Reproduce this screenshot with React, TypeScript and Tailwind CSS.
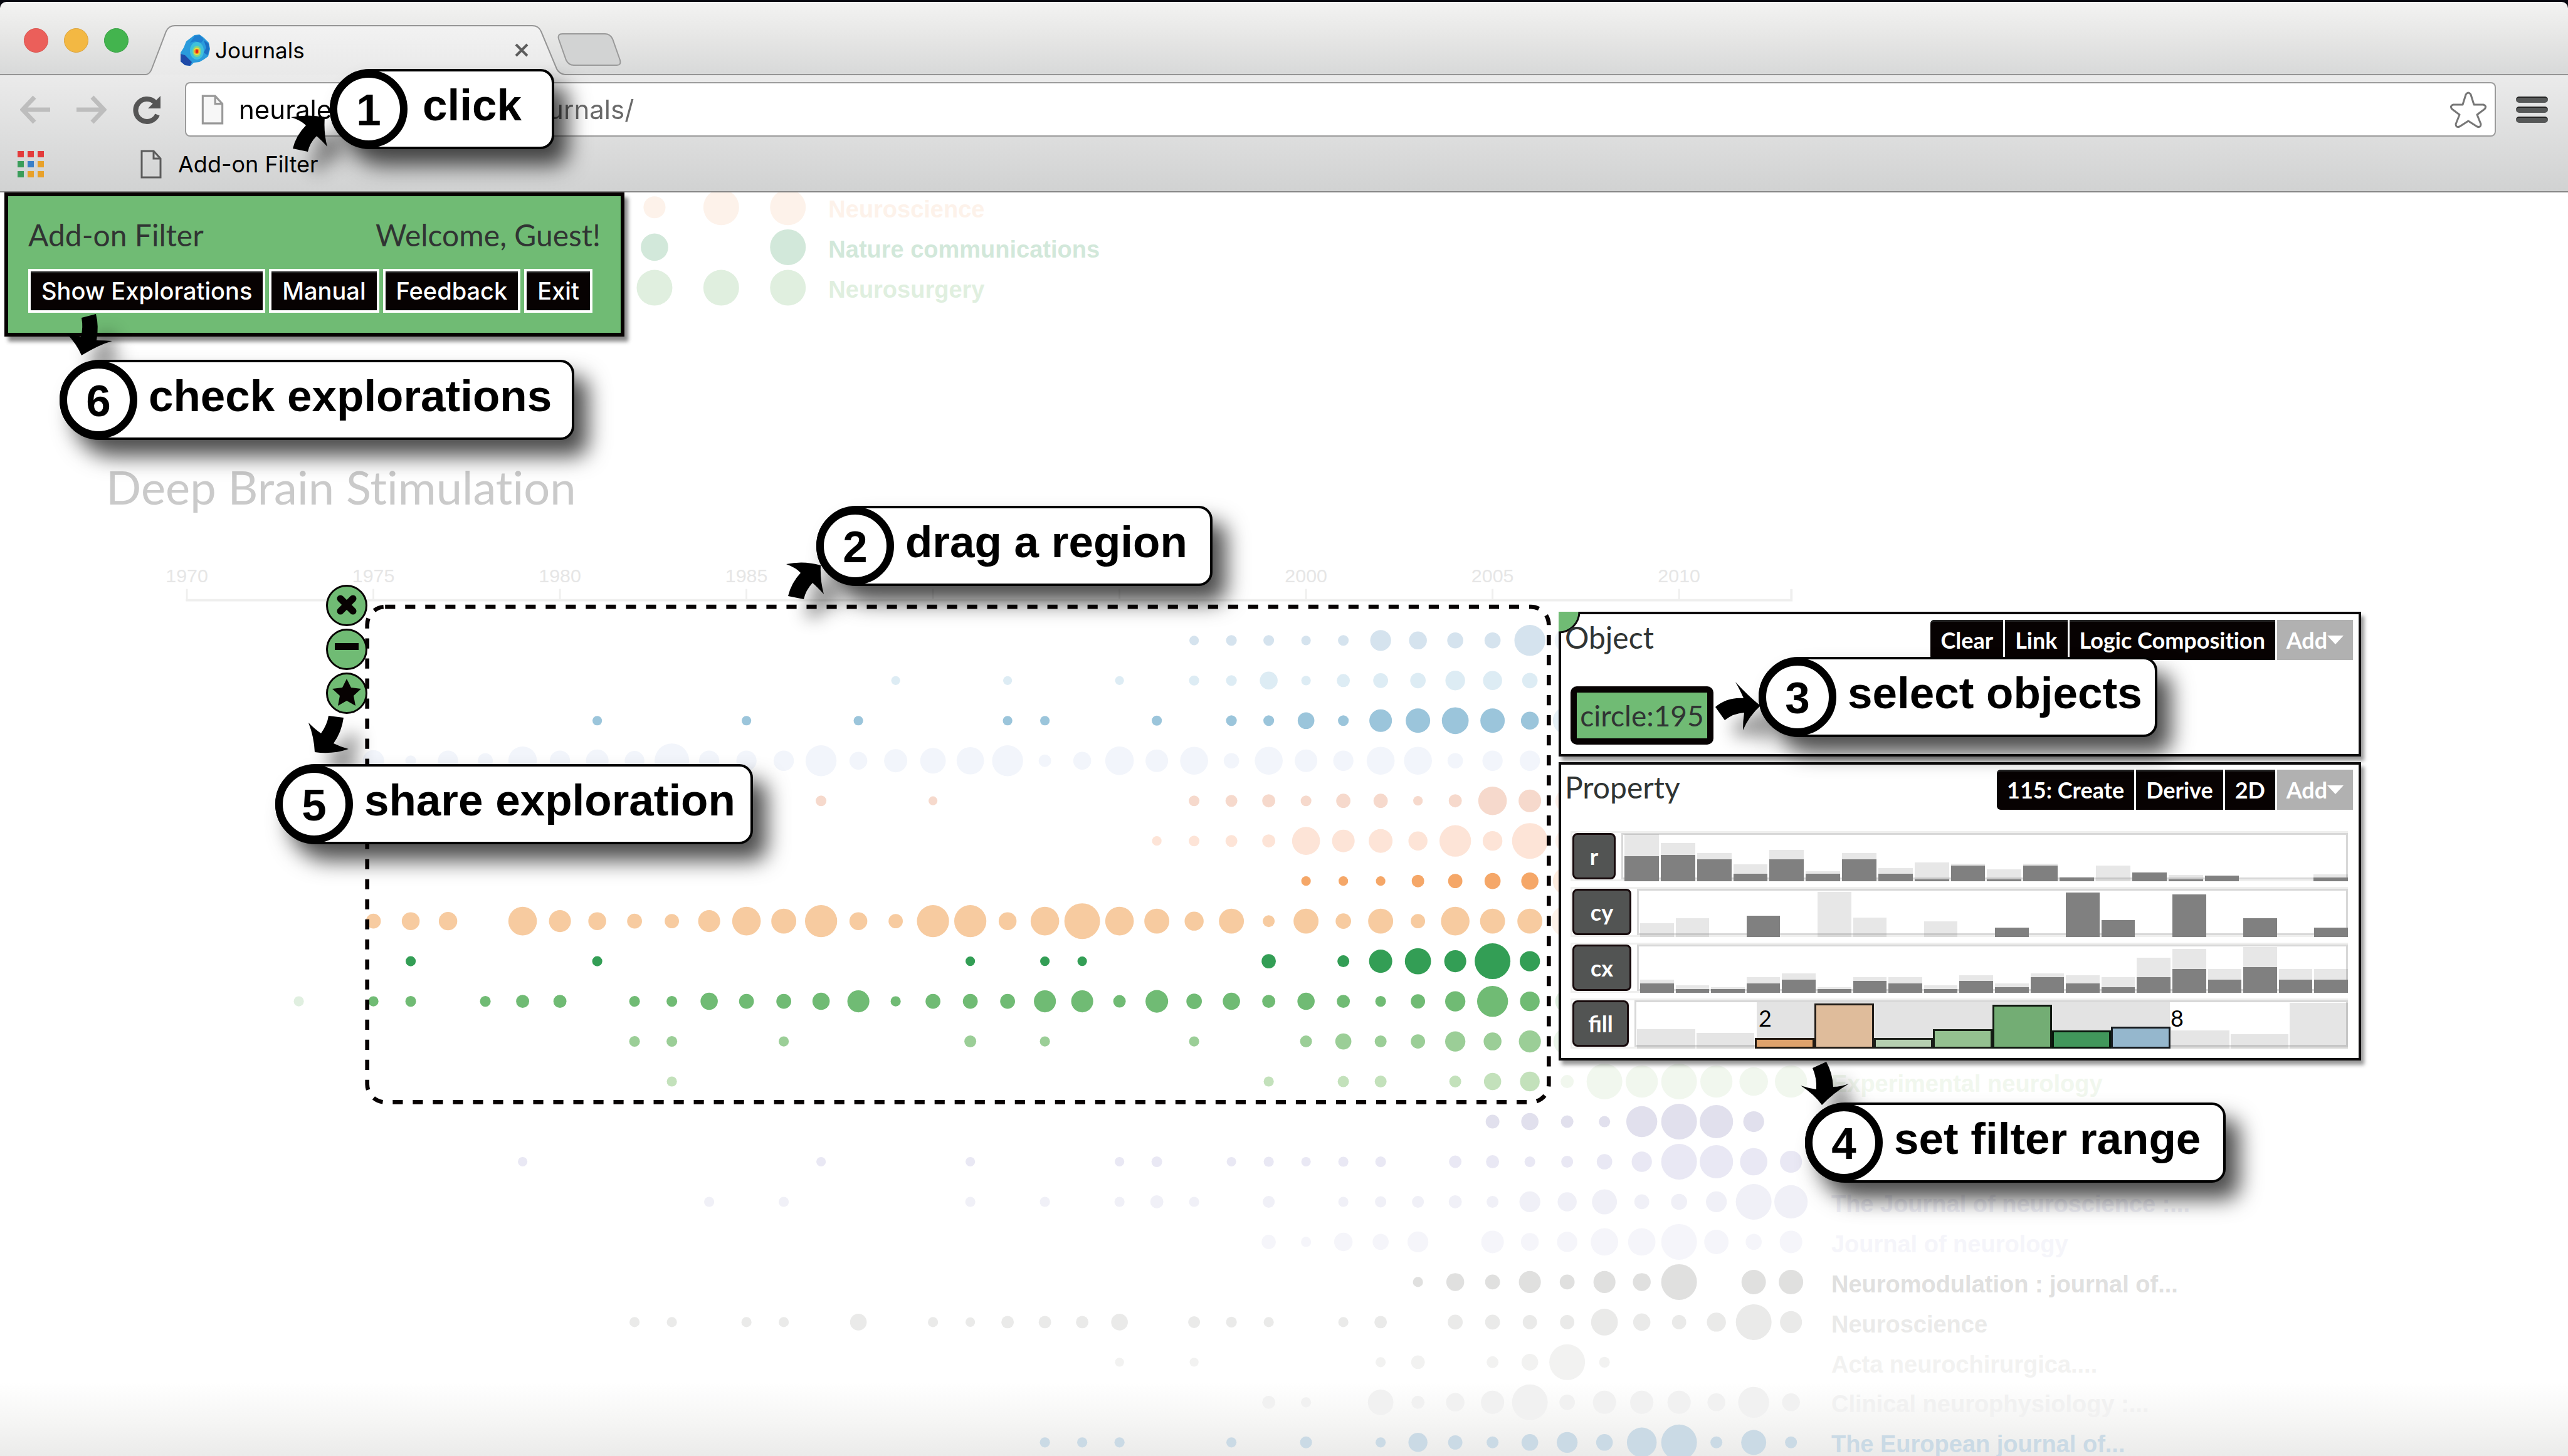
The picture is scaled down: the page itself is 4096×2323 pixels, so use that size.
import React from "react";

type Dot = [number, number];
type Row = { color: string; dots: Dot[]; faint?: string; faintDots?: Dot[]; label?: string };

const YEAR_ZERO_X = 313.8;
const YEAR_STEP = 62.64;
const ROW_ZERO_Y = 1074.5;
const ROW_STEP = 67.35;

/* Each dot is [years after 1970, radius]. */
const rows: Row[] = [
  {
    color: "#d5e3ee",
    dots: [[27, 8], [28, 9], [29, 9], [30, 8], [31, 9], [32, 17.5], [33, 15], [34, 13.5], [35, 13.5], [36, 26]],
    faint: "#f0f5f9",
    faintDots: [[37, 21]],
  },
  {
    color: "#ddecf4",
    dots: [[19, 7.5], [22, 7.5], [25, 7.5], [27, 8.5], [28, 9], [29, 15], [30, 8], [31, 11], [32, 12.5], [33, 13], [34, 16.5], [35, 16], [36, 13]],
  },
  {
    color: "#9bc5db",
    dots: [[11, 8], [15, 8], [18, 8], [22, 8], [23, 8], [26, 8.5], [28, 9], [29, 9], [30, 14], [31, 9], [32, 19], [33, 20.5], [34, 22.5], [35, 20.5], [36, 15]],
    faint: "#e5f0f6",
    faintDots: [[37, 24]],
  },
  {
    color: "#f2f5fb",
    dots: [
      [5, 18], [6, 9], [7, 17], [8, 12.5], [9, 24], [10, 17], [11, 19], [12, 16.5], [13, 29], [14, 17], [15, 17], [16, 17], [17, 26], [18, 15],
      [19, 19.5], [20, 21.5], [21, 23], [22, 26], [23, 10.5], [24, 15], [25, 24], [26, 19], [27, 23.5], [28, 13], [29, 23.5], [30, 19], [31, 17],
      [32, 23.5], [33, 23.5], [34, 13], [35, 17], [36, 17],
    ],
  },
  {
    color: "#f6d9cc",
    dots: [[17, 9], [20, 7.5], [27, 9], [28, 10], [29, 11], [30, 9], [31, 12], [32, 12], [33, 8], [34, 11], [35, 24], [36, 19]],
    faint: "#fdf0ea",
    faintDots: [[37, 20]],
  },
  {
    color: "#fde4d7",
    dots: [[26, 8], [27, 9], [28, 10], [29, 11], [30, 23.5], [31, 19], [32, 20], [33, 16], [34, 26.5], [35, 16.5], [36, 30]],
    faint: "#fef3ed",
    faintDots: [[37, 20]],
  },
  {
    color: "#f5a768",
    dots: [[30, 8], [31, 8], [32, 8], [33, 10.5], [34, 12], [35, 13.5], [36, 14.5]],
    faint: "#fdecdf",
    faintDots: [[37, 24]],
  },
  {
    color: "#f7cba0",
    dots: [
      [5, 12.5], [6, 15], [7, 15.5], [9, 24], [10, 18.5], [11, 15], [12, 12.5], [13, 12], [14, 18.5], [15, 24], [16, 21], [17, 27], [18, 15],
      [19, 12], [20, 27], [21, 27], [22, 15], [23, 24], [24, 30], [25, 24], [26, 21], [27, 16], [28, 21], [29, 10], [30, 21], [31, 13],
      [32, 21], [33, 12], [34, 24], [35, 21], [36, 21],
    ],
    faint: "#fdf2e9",
    faintDots: [[37, 27]],
  },
  {
    color: "#339e55",
    dots: [[6, 8.5], [11, 8.5], [21, 8], [23, 8], [24, 8], [29, 12], [31, 10], [32, 19.5], [33, 22], [34, 18.5], [35, 30], [36, 17]],
  },
  {
    color: "#70bb74",
    dots: [
      [5, 8.5], [6, 9], [8, 9], [9, 11], [10, 11], [12, 9], [13, 9], [14, 14.5], [15, 12.5], [16, 12.5], [17, 14.5], [18, 18.5], [19, 8.5],
      [20, 12.5], [21, 12.5], [22, 12.5], [23, 18.5], [24, 18.5], [25, 10.5], [26, 19], [27, 13], [28, 14.5], [29, 11], [30, 14.5], [31, 11],
      [32, 9], [33, 12], [34, 17], [35, 26], [36, 16.5],
    ],
    faint: "#e0efe0",
    faintDots: [[3, 8.5], [37, 20]],
  },
  {
    color: "#9bce97",
    dots: [[12, 9], [13, 9], [16, 8.5], [21, 10], [23, 8.5], [27, 8.5], [30, 10], [31, 13.5], [32, 10], [33, 12], [34, 17], [35, 15], [36, 18.5]],
    faint: "#ebf5ea",
    faintDots: [[37, 23]],
  },
  {
    color: "#c3e1bb",
    dots: [[13, 8.5], [29, 8.5], [31, 9.5], [32, 10], [34, 10], [35, 14.5], [36, 16.5]],
    faint: "#f1f7ee",
    faintDots: [[37, 11], [38, 30], [39, 27], [40, 30], [41, 27], [42, 24], [43, 27]],
    label: "Experimental neurology",
  },
  {
    color: "#e1e0ed",
    dots: [[35, 11.5], [36, 14.5], [37, 10.5], [38, 9.5], [39, 26], [40, 30], [41, 28], [42, 17.5]],
  },
  {
    color: "#e9e8f4",
    dots: [
      [9, 8], [17, 8], [21, 8], [25, 8], [26, 9], [28, 8], [29, 8.5], [30, 8], [31, 8.5], [32, 9], [34, 10.5], [35, 11], [36, 9], [37, 10],
      [38, 13], [39, 17], [40, 30], [41, 28], [42, 23], [43, 18.5],
    ],
  },
  {
    color: "#f0f0f7",
    dots: [
      [14, 8.5], [16, 8.5], [21, 8.5], [23, 8.5], [25, 8.5], [26, 11], [27, 8.5], [29, 10], [31, 8.5], [32, 9.5], [33, 10], [34, 11], [35, 10],
      [36, 17.5], [37, 16], [38, 21], [39, 12.5], [40, 13.5], [41, 17.5], [42, 30], [43, 28],
    ],
    label: "The Journal of neuroscience :...",
  },
  {
    color: "#f5f5fa",
    dots: [[29, 12], [30, 8.5], [31, 15.5], [32, 13.5], [33, 17.5], [35, 19], [36, 15], [37, 17], [38, 23], [39, 23], [40, 30], [41, 20.5], [42, 13.5], [43, 19]],
    label: "Journal of neurology",
  },
  {
    color: "#e0e0df",
    dots: [[33, 8.5], [34, 15], [35, 12.5], [36, 18.5], [37, 12.5], [38, 18.5], [39, 15], [40, 30], [42, 20.5], [43, 20.5]],
    label: "Neuromodulation : journal of...",
  },
  {
    color: "#eaeae9",
    dots: [
      [12, 8.5], [13, 8.5], [15, 8.5], [16, 8.5], [18, 14], [20, 8.5], [21, 8], [22, 10.5], [23, 10.5], [24, 10.5], [25, 14], [27, 10],
      [28, 9], [29, 8.5], [31, 8.5], [32, 10.5], [34, 12.5], [35, 12.5], [36, 12], [37, 12], [38, 22.5], [39, 14.5], [40, 12], [41, 16], [42, 30], [43, 18.5],
    ],
    label: "Neuroscience",
  },
  {
    color: "#f2f2f1",
    dots: [[25, 7.5], [27, 7.5], [32, 8.5], [33, 11.5], [35, 10], [36, 14], [37, 30], [38, 9]],
    label: "Acta neurochirurgica....",
  },
  {
    color: "#f1f1f1",
    dots: [[29, 11], [30, 8.5], [32, 21.5], [33, 11], [34, 15.5], [35, 19.5], [36, 30], [37, 13], [38, 19.5], [39, 19.5], [40, 19.5], [41, 15], [42, 26], [43, 15]],
    label: "Clinical neurophysiology :...",
  },
  {
    color: "#cadae5",
    dots: [
      [23, 8.5], [24, 8.5], [25, 8.5], [28, 8.5], [30, 10], [32, 8.5], [33, 16], [34, 12], [35, 10], [36, 14], [37, 17.5], [38, 14], [39, 25],
      [40, 30], [41, 10], [42, 21], [43, 10],
    ],
    label: "The European journal of...",
  },
];

const topRows = [
  { y: 347, color: "#fdf2ea", dots: [[1099, 18.5], [1211, 30], [1323, 30]] as Dot[], label: "Neuroscience" },
  { y: 414, color: "#d2e8da", dots: [[1099, 23], [1323, 30]] as Dot[], label: "Nature communications" },
  { y: 482, color: "#e0efdf", dots: [[1099, 30], [1211, 30], [1323, 30]] as Dot[], label: "Neurosurgery" },
];

function BubbleChart() {
  const x = (i: number) => YEAR_ZERO_X + i * YEAR_STEP;
  return (
    <svg viewBox="0 322 4312 2123" className="block w-full" role="img" aria-label="Publications per journal and year">
      <defs>
        <linearGradient id="floor" x1="0" y1="0" x2="0" y2="1">
          <stop offset="0" stopColor="#ffffff" />
          <stop offset="0.5" stopColor="#f6f6f5" />
          <stop offset="1" stopColor="#ebebea" />
        </linearGradient>
      </defs>
      <rect x="0" y="2320" width="4312" height="125" fill="url(#floor)" />
      {topRows.map((r) => (
        <g key={r.label} fill={r.color}>
          {r.dots.map(([cx, radius]) => (
            <circle key={cx} cx={cx} cy={r.y} r={radius} />
          ))}
          <text x="1391" y={r.y + 17} fontSize="40" fontWeight="700" fontFamily="'Liberation Sans', sans-serif">
            {r.label}
          </text>
        </g>
      ))}
      <text x="178" y="846" fontSize="78" fill="#cacaca" fontFamily="Lato, sans-serif" className="[font-variant-ligatures:none]">
        Deep Brain Stimulation
      </text>
      <path d={`M312 1007H3010M3008 988V1007`} stroke="#efefee" strokeWidth="4" fill="none" />
      {[0, 5, 10, 15, 20, 25, 30, 35, 40].map((i) => (
        <g key={i}>
          <path d={`M${x(i)} 988V1007`} stroke="#efefee" strokeWidth="3" />
          <text x={x(i)} y="977" fontSize="32" textAnchor="middle" fill="#e6e6e6" fontFamily="'Liberation Sans', sans-serif">
            {1970 + i}
          </text>
        </g>
      ))}
      {rows.map((row, n) => {
        const cy = ROW_ZERO_Y + n * ROW_STEP;
        return (
          <g key={n}>
            {row.faintDots?.map(([i, r]) => (
              <circle key={i} cx={x(i)} cy={cy} r={r} fill={row.faint} />
            ))}
            {row.dots.map(([i, r]) => (
              <circle key={i} cx={x(i)} cy={cy} r={r} fill={row.color} />
            ))}
            {row.label && (
              <text x="3075" y={cy + 17} fontSize="40" fontWeight="700" fill={row.faint ?? row.color} fontFamily="'Liberation Sans', sans-serif">
                {row.label}
              </text>
            )}
          </g>
        );
      })}
      <rect x="616.6" y="1018" width="1984" height="832" rx="30" fill="none" stroke="#070202" strokeWidth="7" strokeDasharray="17 16.7" />
    </svg>
  );
}

function PageIcon({ className, stroke, fill }: { className: string; stroke: string; fill: string }) {
  return (
    <svg viewBox="0 0 34 46" className={className} aria-hidden="true">
      <path d="M2 2H21L32 14V44H2Z" fill={fill} stroke={stroke} strokeWidth="3" />
      <path d="M21 2V14H32" fill="none" stroke={stroke} strokeWidth="3" />
    </svg>
  );
}

function Favicon() {
  return (
    <svg viewBox="0 0 48 52" className="h-[52px] w-12" aria-hidden="true">
      <path d="M23 2L31 1L38 6L46 14L48 24L45 36L38 41L31 45L22 46L17 51L8 50L1 44L1 30L6 22L10 12Z" fill="#2a9bdc" />
      <path d="M24 3L32 2L38 9L34 14L24 12L16 14Z" fill="#1f7fd0" />
      <path d="M38 10L46 16L47 26L44 34L38 30L42 22Z" fill="#1c6fc4" />
      <path d="M1 32L8 34L14 40L19 45L16 51L8 50L1 44Z" fill="#1f4aa8" />
      <ellipse cx="27" cy="27" rx="11" ry="14" fill="#3fc1dc" />
      <ellipse cx="27" cy="28" rx="7" ry="9" fill="#7ed48c" />
      <ellipse cx="27" cy="28" rx="5" ry="6" fill="#f2dc3a" />
      <ellipse cx="27" cy="28" rx="4" ry="4" fill="#f28a20" />
      <ellipse cx="27" cy="28" rx="2" ry="3" fill="#e0201c" />
    </svg>
  );
}

function BrowserChrome() {
  const apps = ["#e33b3b", "#e33b3b", "#e33b3b", "#3a9d5a", "#3a7fc8", "#e8a12a", "#3a9d5a", "#e8a12a", "#e8a12a"];
  return (
    <header className="bg-[#070810] pt-[3px] font-['Inter',sans-serif] text-black">
      <div className="flex h-[117px] items-end rounded-t-[10px] border-b-2 border-[#959595] bg-linear-to-b from-[#f3f3f2] via-[#e6e6e5] to-[#d8d9d9]">
        <div className="mb-[34px] ml-[38px] flex gap-[25px]">
          <button aria-label="Close window" className="size-[39px] rounded-full border border-[#d9524d] bg-[#eb5f5a]" />
          <button aria-label="Minimise window" className="size-[39px] rounded-full border border-[#dba33a] bg-[#f3b843]" />
          <button aria-label="Zoom window" className="size-[39px] rounded-full border border-[#35a043] bg-[#43b44e]" />
        </div>
        <div className="relative -mb-[2px] ml-7 flex h-20 w-[668px] items-center">
          <svg viewBox="0 0 668 80" className="absolute inset-0 size-full" preserveAspectRatio="none" aria-hidden="true">
            <defs>
              <linearGradient id="tab" x1="0" y1="0" x2="0" y2="1">
                <stop offset="0" stopColor="#f2f2f2" />
                <stop offset="1" stopColor="#e9e9e9" />
              </linearGradient>
            </defs>
            <path d="M0 80V79Q6 78 9 70L32 10Q36 1 46 1H616Q626 1 630 10L655 70Q659 78 668 79V80Z" fill="url(#tab)" />
            <path d="M0 79Q6 78 9 70L32 10Q36 1 46 1H616Q626 1 630 10L655 70Q659 78 668 79" fill="none" stroke="#959595" strokeWidth="2" />
          </svg>
          <div className="relative flex w-full items-center pl-[54px] pr-[57px]">
            <Favicon />
            <span className="ml-2 flex-1 text-[35px] leading-10">Journals</span>
            <button aria-label="Close tab">
              <svg viewBox="0 0 24 24" className="size-6" aria-hidden="true">
                <path d="M3 3L21 21M21 3L3 21" stroke="#5c5c5c" strokeWidth="4" />
              </svg>
            </button>
          </div>
        </div>
        <button aria-label="New tab" className="-ml-3 mb-3">
          <svg viewBox="0 0 102 54" className="h-[54px] w-[102px]" aria-hidden="true">
            <path d="M8 2H76Q84 2 88 10L100 44Q102 52 95 52H26Q18 52 14 44L2 10Q0 2 8 2Z" fill="#d2d3d3" stroke="#999999" strokeWidth="2" />
          </svg>
        </button>
      </div>
      <div className="border-b-2 border-[#858585] bg-linear-to-b from-[#ebebeb] to-[#d1d2d2]">
        <div className="flex items-center gap-8 pl-8 pr-8 pt-[11px]">
          <div className="flex w-[231px] items-center gap-[38px]">
            <button aria-label="Back">
              <svg viewBox="0 0 50 46" className="h-[46px] w-[50px]" aria-hidden="true">
                <path d="M48 23H6M23 3L4 23L23 43" fill="none" stroke="#bdbdbd" strokeWidth="7" />
              </svg>
            </button>
            <button aria-label="Forward">
              <svg viewBox="0 0 50 46" className="h-[46px] w-[50px]" aria-hidden="true">
                <path d="M2 23H44M27 3L46 23L27 43" fill="none" stroke="#bdbdbd" strokeWidth="7" />
              </svg>
            </button>
            <button aria-label="Reload" className="ml-1">
              <svg viewBox="0 0 46 46" className="size-[46px]" aria-hidden="true">
                <path d="M39 31A18 18 0 1 1 35 11" fill="none" stroke="#555555" strokeWidth="8" />
                <path d="M44 1V21H24Z" fill="#555555" />
              </svg>
            </button>
          </div>
          <div className="flex h-[87px] flex-1 items-center rounded-lg border-2 border-[#9b9b9b] bg-white pl-6 pr-3">
            <PageIcon className="h-12 w-9 shrink-0" stroke="#999999" fill="#f7f7f7" />
            <input
              aria-label="Address"
              defaultValue="neuralexploration.com/journals/"
              className="ml-6 min-w-0 flex-1 bg-linear-to-r from-black from-[450px] to-[#6a6a6a] to-[450px] bg-clip-text text-[42px] leading-[60px] text-transparent outline-none"
            />
            <button aria-label="Bookmark this page">
              <svg viewBox="0 0 60 58" className="h-[58px] w-[60px]" aria-hidden="true">
                <path
                  d="M26 5Q30 -1 34 5L39 21H54Q60 23 56 28L44 37L50 52Q50 58 44 56L30 47L16 56Q10 58 10 52L16 37L4 28Q0 23 6 21H21Z"
                  fill="white"
                  stroke="#777777"
                  strokeWidth="3"
                  strokeLinejoin="round"
                />
              </svg>
            </button>
          </div>
          <button aria-label="Menu" className="flex w-[51px] flex-col gap-[6px]">
            <span className="h-[10px] rounded-full border-t-2 border-[#222222] bg-[#565858]" />
            <span className="h-[10px] rounded-full border-t-2 border-[#222222] bg-[#565858]" />
            <span className="h-[10px] rounded-full border-t-2 border-[#222222] bg-[#565858]" />
          </button>
        </div>
        <nav aria-label="Bookmarks" className="flex h-[87px] items-center pl-[28px]">
          <button aria-label="Apps" className="grid grid-cols-3 gap-[6px]">
            {apps.map((c, i) => (
              <span key={i} className="size-[10px]" style={{ backgroundColor: c }} />
            ))}
          </button>
          <a href="#add-on" className="ml-[154px] flex items-center gap-[26px] text-[36px] leading-10">
            <PageIcon className="h-[46px] w-[34px]" stroke="#5c5c5c" fill="none" />
            Add-on Filter
          </a>
        </nav>
      </div>
    </header>
  );
}

function AddOnPanel() {
  return (
    <section
      id="add-on"
      className="absolute left-[7px] top-[307px] h-[230px] w-[989px] border-6 border-[#070202] bg-[#70bb74] px-8 pt-[34px] shadow-[6px_8px_6px_rgba(0,0,0,0.45)]"
    >
      <div className="flex justify-between font-['Lato',sans-serif] text-[48px] leading-[56px] text-[#303433]">
        <h2>Add-on Filter</h2>
        <p>Welcome, Guest!</p>
      </div>
      <div className="mt-[26px] flex gap-[6px] font-['Inter',sans-serif] text-[38px] font-medium leading-[62px] text-white">
        {["Show Explorations", "Manual", "Feedback", "Exit"].map((t) => (
          <button key={t} className="border-4 border-white bg-[#070202] px-[17px] shadow-[inset_0_3px_0_#222222]">
            {t}
          </button>
        ))}
      </div>
    </section>
  );
}

function ToolButtons({ labels }: { labels: string[] }) {
  return (
    <div className="flex gap-[3px] font-['Lato',sans-serif] text-[36px] font-bold leading-[64px] text-white [font-variant-ligatures:none]">
      {labels.map((t) => (
        <button key={t} className="bg-[#070202] px-4 shadow-[inset_0_3px_0_#222222] first:rounded-l-md">
          {t}
        </button>
      ))}
      <button className="flex w-[121px] items-center justify-center bg-[#b1b1b1]">
        Add
        <svg viewBox="0 0 26 14" className="h-[14px] w-[26px]" aria-hidden="true">
          <path d="M0 0H26L13 14Z" fill="white" />
        </svg>
      </button>
    </div>
  );
}

type Bar = [number, number];
const rBars: Bar[] = [
  [75, 40], [61, 42], [45, 35], [27, 12], [50, 35], [16, 12], [45, 35], [21, 12], [30, 3], [28, 25],
  [19, 3], [28, 25], [7, 6], [25, 0], [14, 14], [10, 3], [9, 9], [0, 0], [0, 0], [11, 6],
];
const cyBars: Bar[] = [
  [22, 0], [30, 0], [0, 0], [34, 34], [0, 0], [72, 0], [31, 0], [0, 0], [25, 0], [0, 0],
  [15, 15], [0, 0], [71, 71], [27, 27], [0, 0], [68, 68], [0, 0], [30, 30], [0, 0], [15, 15],
];
const cxBars: Bar[] = [
  [21, 15], [12, 6], [9, 6], [25, 15], [31, 21], [9, 6], [25, 19], [25, 15], [12, 6], [28, 19],
  [15, 9], [31, 25], [28, 15], [25, 9], [56, 25], [70, 38], [38, 21], [73, 41], [38, 21], [38, 21],
];

function PropertyRow({ name, children, wide }: { name: string; wide: string; children: React.ReactNode }) {
  return (
    <div className="flex h-20 border-[3px] border-r-0 border-[#efefee]">
      <button
        className={`${wide} h-[74px] shrink-0 rounded-lg border-[3px] border-[#170a0c] bg-[#525453] font-['Lato',sans-serif] text-[36px] font-bold leading-[60px] text-white`}
      >
        {name}
      </button>
      <div className="relative ml-[9px] flex flex-1">
        <div className="absolute inset-0 border-[3px] border-[#d8d8d8]" />
        {children}
      </div>
    </div>
  );
}

function Bars({ bars }: { bars: Bar[] }) {
  return (
    <div className="relative -mb-[3px] flex flex-1 items-end gap-[3px] pl-[5px]">
      {bars.map(([total, picked], i) => (
        <div key={i} className="flex flex-1 items-end bg-[#888888]/20" style={{ height: total }}>
          <div className="w-full bg-[#808080]" style={{ height: picked }} />
        </div>
      ))}
    </div>
  );
}

function FillBars() {
  const bars: [number, string | null][] = [
    [31, null], [25, null], [17, "#dea26c"], [72, "#dfbc9b"], [17, "#b5cfb0"], [31, "#94c190"],
    [70, "#73ad74"], [29, "#41975b"], [35, "#95b7cd"], [29, null], [23, null], [73, null],
  ];
  return (
    <div className="relative -mb-[3px] flex flex-1">
      <div className="absolute bottom-[3px] left-[195px] right-[284px] top-[3px] bg-[#e3e3e3]" />
      <div className="relative grid flex-1 grid-cols-12 items-end gap-[2px] pl-1">
        {bars.map(([h, c], i) =>
          c ? (
            <div key={i} className="-mx-px border-[3px] border-black/85" style={{ height: h, backgroundColor: c }} />
          ) : (
            <div key={i} className="bg-[#888888]/22" style={{ height: h }} />
          ),
        )}
      </div>
      <span className="absolute left-[198px] top-2 font-['Lato',sans-serif] text-[36px] leading-10 text-black">2</span>
      <span className="absolute right-[262px] top-2 font-['Lato',sans-serif] text-[36px] leading-10 text-black">8</span>
    </div>
  );
}

function FilterPanels() {
  return (
    <div className="absolute left-[2486px] top-[976px] flex w-[1280px] flex-col gap-[9px] font-['Lato',sans-serif] text-[#303433]">
      <section className="relative h-[231px] border-4 border-[#0d0b0c] bg-white pl-[6px] pr-[9px] pt-[9px] shadow-[5px_7px_6px_rgba(0,0,0,0.4)]">
        <svg viewBox="0 0 36 36" className="absolute -left-1 -top-1 size-9" aria-hidden="true">
          <path d="M0 0H33A33 33 0 0 1 0 33Z" fill="#70bb74" />
          <path d="M33 0A33 33 0 0 1 0 33" fill="none" stroke="#0d0b0c" strokeWidth="3" />
        </svg>
        <div className="flex justify-between">
          <h2 className="relative text-[48px] leading-[56px]">Object</h2>
          <ToolButtons labels={["Clear", "Link", "Logic Composition"]} />
        </div>
        <button className="ml-[9px] mt-[42px] h-[93px] w-[228px] rounded-[10px] border-10 border-[#070202] bg-[#70bb74] text-[46px] leading-[70px]">
          circle:195
        </button>
      </section>
      <section className="h-[476px] border-4 border-[#0d0b0c] bg-white pr-[9px] pt-[8px] shadow-[5px_7px_6px_rgba(0,0,0,0.4)]">
        <div className="flex justify-between pl-[6px]">
          <h2 className="text-[48px] leading-[56px]">Property</h2>
          <ToolButtons labels={["115: Create", "Derive", "2D"]} />
        </div>
        <div className="ml-[15px] mr-2 mt-[34px] flex flex-col gap-[9px]">
          <PropertyRow name="r" wide="w-[69px]">
            <Bars bars={rBars} />
          </PropertyRow>
          <PropertyRow name="cy" wide="w-[94px]">
            <Bars bars={cyBars} />
          </PropertyRow>
          <PropertyRow name="cx" wide="w-[94px]">
            <Bars bars={cxBars} />
          </PropertyRow>
          <PropertyRow name="fill" wide="w-[90px]">
            <FillBars />
          </PropertyRow>
        </div>
      </section>
    </div>
  );
}

function RegionButtons() {
  const base = "flex size-[66px] items-center justify-center rounded-full border-[3px] border-[#070202] bg-[#70bb74]";
  return (
    <div className="absolute left-[520px] top-[933px] flex flex-col gap-1">
      <button aria-label="Remove region" className={base}>
        <svg viewBox="0 0 40 40" className="size-10" aria-hidden="true">
          <path d="M10 9L30 29M30 9L10 29" stroke="#070202" strokeWidth="11" strokeLinecap="round" />
        </svg>
      </button>
      <button aria-label="Collapse region" className={base}>
        <svg viewBox="0 0 40 40" className="size-10" aria-hidden="true">
          <path d="M1 10H39V21H1Z" fill="#070202" />
        </svg>
      </button>
      <button aria-label="Share region" className={base}>
        <svg viewBox="0 0 48 46" className="h-[46px] w-12" aria-hidden="true">
          <path d="M24 0L31 14L47 16L35 27L38 43L24 35L10 43L13 27L1 16L17 14Z" fill="#070202" />
        </svg>
      </button>
    </div>
  );
}

const callouts = [
  {
    n: 1, text: "click", place: "left-[526px] top-[110px] pr-12", gap: "ml-6",
    arrow: "left-[460px] top-[180px] h-[70px] w-[70px]", box: "460 180 70 70",
    path: "M467 237L491 242Q494 228 505 217Q513 224 522 234Q516 212 518 187Q492 182 464 187Q480 192 488 200Q472 216 467 237Z",
  },
  {
    n: 2, text: "drag a region", place: "left-[1302px] top-[807px] pr-9", gap: "ml-[18px]",
    arrow: "left-[1250px] top-[890px] h-[70px] w-[70px]", box: "1250 890 70 70",
    path: "M1257 951L1282 956Q1285 942 1296 930Q1304 937 1314 948Q1308 926 1309 902Q1282 894 1254 900Q1270 906 1277 914Q1262 930 1257 951Z",
  },
  {
    n: 3, text: "select objects", place: "left-[2805px] top-[1048px] pr-5", gap: "ml-[18px]",
    arrow: "left-[2730px] top-[1080px] h-[90px] w-[90px]", box: "2730 1080 90 90",
    path: "M2736 1128L2751 1149Q2765 1138 2782 1137Q2780 1150 2780 1165Q2790 1142 2808 1126Q2788 1110 2768 1088Q2776 1102 2781 1114Q2755 1112 2736 1128Z",
  },
  {
    n: 4, text: "set filter range", place: "left-[2879px] top-[1759px] pr-9", gap: "ml-[18px]",
    arrow: "left-[2865px] top-[1690px] h-[80px] w-[90px]", box: "2865 1690 90 80",
    path: "M2891 1704L2913 1694Q2923 1712 2924 1734Q2936 1734 2949 1729Q2924 1744 2906 1763Q2894 1746 2872 1732Q2884 1736 2897 1738Q2898 1720 2891 1704Z",
  },
  {
    n: 5, text: "share exploration", place: "left-[439px] top-[1219px] pr-6", gap: "ml-[18px]",
    arrow: "left-[485px] top-[1135px] h-[75px] w-[80px]", box: "485 1135 80 75",
    path: "M524 1142L548 1145Q545 1168 532 1186Q544 1192 556 1195Q530 1204 502 1200Q501 1176 492 1153Q503 1164 512 1170Q522 1156 524 1142Z",
  },
  {
    n: 6, text: "check explorations", place: "left-[95px] top-[574px] pr-8", gap: "ml-[18px]",
    arrow: "left-[100px] top-[495px] h-[80px] w-[90px]", box: "100 495 90 80",
    path: "M130 507L153 501Q158 520 154 543Q166 543 179 544Q158 550 130 567Q122 548 105 531Q119 535 129 538Q133 522 130 507Z",
  },
];

function Callout({ c }: { c: (typeof callouts)[number] }) {
  return (
    <>
      <svg viewBox={c.box} className={`absolute overflow-visible drop-shadow-[26px_30px_14px_rgba(0,0,0,0.45)] ${c.arrow}`} aria-hidden="true">
        <path d={c.path} fill="black" />
      </svg>
      <div
        className={`absolute flex h-32 items-center whitespace-nowrap rounded-l-[64px] rounded-r-[22px] border-4 border-black bg-white font-['Liberation_Sans',sans-serif] text-[71px] font-bold leading-[72px] text-black shadow-[22px_26px_34px_rgba(0,0,0,0.7)] ${c.place}`}
      >
        <span className="-ml-1 flex size-[124px] shrink-0 items-center justify-center rounded-full border-12 border-black bg-white pt-1">{c.n}</span>
        <span className={`pb-3 ${c.gap}`}>{c.text}</span>
      </div>
    </>
  );
}

export default function App() {
  return (
    <div className="relative flex h-screen w-full flex-col overflow-hidden bg-white">
      <BrowserChrome />
      <main className="flex-1">
        <BubbleChart />
      </main>
      <AddOnPanel />
      <FilterPanels />
      <RegionButtons />
      {callouts.map((c) => (
        <Callout key={c.n} c={c} />
      ))}
    </div>
  );
}
